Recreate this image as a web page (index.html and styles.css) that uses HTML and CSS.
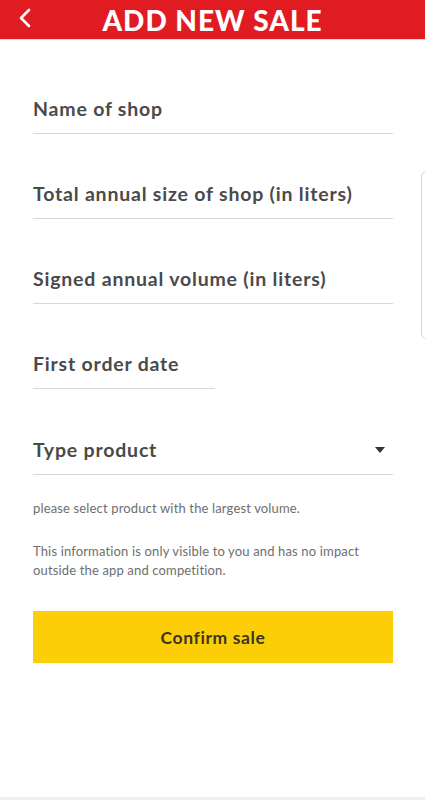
FILE: index.html
```html
<!DOCTYPE html>
<html lang="en">
<head>
<meta charset="utf-8">
<title>Add new sale</title>
<link rel="stylesheet" href="styles.css">
</head>
<body>
<div class="screen">
  <header class="topbar">
    <button class="back" aria-label="Back">
      <svg width="14" height="20" viewBox="0 0 14 20"><path d="M11 2 L3 10 L11 18" fill="none" stroke="#fff" stroke-width="2.6" stroke-linecap="round" stroke-linejoin="round"/></svg>
    </button>
    <h1 class="title">ADD NEW SALE</h1>
  </header>
  <main class="form">
    <div class="field"><span class="label">Name of shop</span></div>
    <div class="field"><span class="label">Total annual size of shop (in liters)</span></div>
    <div class="field"><span class="label">Signed annual volume (in liters)</span></div>
    <div class="field field-short"><span class="label">First order date</span></div>
    <div class="field field-select"><span class="label">Type product</span><span class="caret"></span></div>
    <p class="help first">please select product with the largest volume.</p>
    <p class="help">This information is only visible to you and has no impact outside the app and competition.</p>
    <button class="confirm">Confirm sale</button>
  </main>
  <div class="edge-handle"></div>
  <div class="bottom-strip"></div>
</div>
</body>
</html>
```
FILE: styles.css
```css
* { box-sizing: border-box; }
html, body { margin: 0; padding: 0; background: #fff; }
body { font-family: "Lato", "Noto Sans", sans-serif; }
.screen { position: relative; width: 425px; height: 800px; overflow: hidden; background: #fff; }
.topbar {
  height: 40px; background: #e11b22; display: flex; align-items: center; justify-content: center;
  position: relative; border-bottom: 1px solid #f3d5d5;
}
.back {
  position: absolute; left: 16px; top: 7px; background: none; border: 0; padding: 0; width: 18px; height: 22px;
  display: flex; align-items: center; justify-content: center;
}
.title {
  margin: 0; color: #fff; font-size: 28px; font-weight: 900; letter-spacing: 1px; line-height: 40px;
}
.form { padding: 57px 32px 0 33px; display: flex; flex-direction: column; }
.field {
  display: flex; align-items: center; justify-content: space-between;
  padding-bottom: 12px; border-bottom: 1px solid #d8d8d8; margin-bottom: 48px;
}
.field-short { width: 182px; margin-bottom: 49px; }
.field-select { margin-bottom: 0; }
.label { font-size: 19.5px; font-weight: 700; color: #4a4a4a; line-height: 24px; letter-spacing: 0.8px; }
.caret {
  width: 0; height: 0; border-left: 5.5px solid transparent; border-right: 5.5px solid transparent;
  border-top: 6px solid #333; margin-right: 8px;
}
.help { margin: 0; font-size: 13px; color: #6e6e6e; line-height: 19px; font-weight: 400; letter-spacing: 0.15px; }
.help.first { margin-top: 24px; margin-bottom: 24px; }
.confirm {
  margin-top: 31px; height: 52px; background: #fbce07; border: 0; width: 360px;
  font-family: inherit; font-size: 17.5px; font-weight: 700; color: #3b3520; letter-spacing: 0.6px;
}
.edge-handle {
  position: absolute; right: -10px; top: 170px; width: 14px; height: 170px;
  border: 1px solid #d6d6d6; border-radius: 7px; background: #fff;
}
.bottom-strip { position: absolute; left: 0; right: 0; bottom: 0; height: 3px; background: #efefef; }
```
